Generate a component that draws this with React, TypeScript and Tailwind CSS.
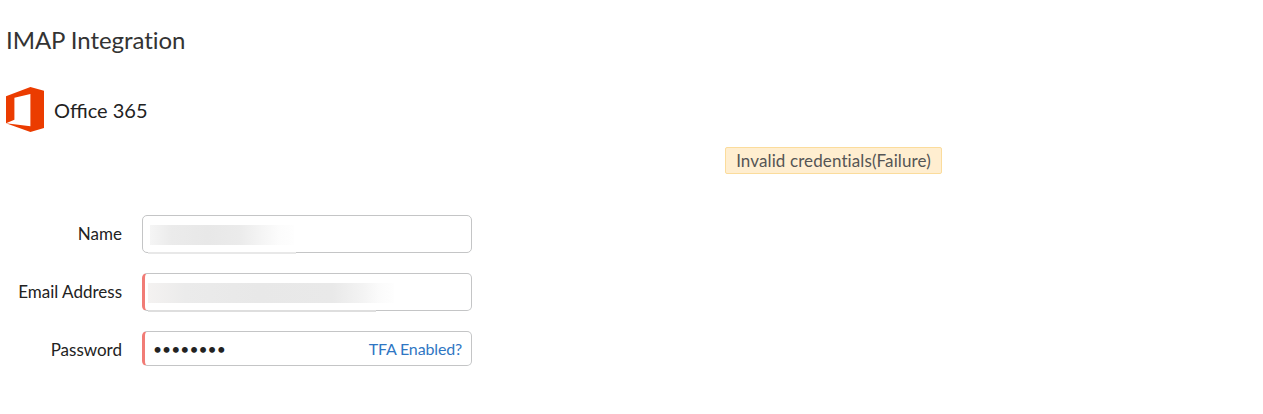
import type { ReactNode } from 'react';

interface FieldRowProps {
  label: string;
  htmlFor: string;
  labelClass?: string;
  children: ReactNode;
}

const FieldRow = ({ label, htmlFor, labelClass = '', children }: FieldRowProps) => (
  <div className="flex items-center">
    <label
      htmlFor={htmlFor}
      className={`w-[122px] mr-5 text-right text-[17px] leading-6 whitespace-nowrap ${labelClass}`}
    >
      {label}
    </label>
    {children}
  </div>
);

const OfficeLogo = () => (
  <svg width="38" height="45" viewBox="0 0 38 45" className="shrink-0" aria-hidden="true">
    <path
      fill="#eb3c00"
      d="M0 9.2 24.4 0 38 3.8V41L24.4 45 0 36.2 24.4 39.2V7L8.4 10.8V32.8L0 36.2Z"
    />
  </svg>
);

export default function App() {
  return (
    <main className="h-[414px] overflow-hidden bg-white pt-[25px] font-['Lato',sans-serif] text-[#222]">
      <h1 className="ml-1.5 text-[24px] leading-[30px] tracking-[-0.06px] text-[#333] [font-variant-ligatures:none]">
        IMAP Integration
      </h1>

      <div className="mt-8 ml-1.5 flex items-center gap-2.5">
        <OfficeLogo />
        <span className="text-[20px] leading-7 text-[#222]">Office 365</span>
      </div>

      <div className="mt-[15px] ml-[725px] flex h-[27px] w-[217px] items-center justify-center rounded-[2px] border border-[#fbdc9c] bg-[#ffeed0] text-[17px] tracking-[0.11px] whitespace-nowrap text-[#555] [font-variant-ligatures:none]">
        Invalid credentials(Failure)
      </div>

      <form className="mt-[41px] flex flex-col gap-5">
        <FieldRow label="Name" htmlFor="name">
          <div id="name" className="relative h-[38px] w-[330px] rounded-[5px] border border-[#c4c5c6] pt-[9px] pl-[7px]">
            {/* masked value */}
            <div className="h-5 w-[144px] bg-[linear-gradient(90deg,#f5f5f5,#ebebeb_15%,#e8e8e8_40%,#ebebeb_62%,#f5f5f5_78%,#fcfcfc_90%,#fefefe)]" />
            <div className="absolute -bottom-0.5 left-[5px] h-0.5 w-[148px] bg-[#e8e8e8]" />
          </div>
        </FieldRow>

        <FieldRow label="Email Address" htmlFor="email">
          <div id="email" className="relative h-[38px] w-[330px] rounded-[5px] border border-l-[3px] border-[#c4c5c6] border-l-[#f17c76] pt-[9px] pl-[3px]">
            <div className="h-5 w-[246px] bg-[linear-gradient(90deg,#f4f2f1,#ebebeb_15%,#e8e8e8_45%,#e9e9e9_75%,#f4f4f4_88%,#fbfbfb_94%,#fefefe)]" />
            <div className="absolute -bottom-0.5 left-[3px] h-0.5 w-[228px] bg-[#dedede]" />
          </div>
        </FieldRow>

        <FieldRow label="Password" htmlFor="password" labelClass="pt-0.5">
          <div className="flex h-[35px] w-[330px] items-center rounded-[5px] border border-l-[3px] border-[#c4c5c6] border-l-[#f17c76] pr-[9px] pl-2">
            <input
              id="password"
              type="password"
              defaultValue="password"
              className="min-w-0 flex-1 pt-0.5 text-[15.7px] text-[#222] outline-none"
            />
            <a href="#" className="text-[16px] tracking-[-0.15px] whitespace-nowrap text-[#2f76c3]">
              TFA Enabled?
            </a>
          </div>
        </FieldRow>
      </form>
    </main>
  );
}
